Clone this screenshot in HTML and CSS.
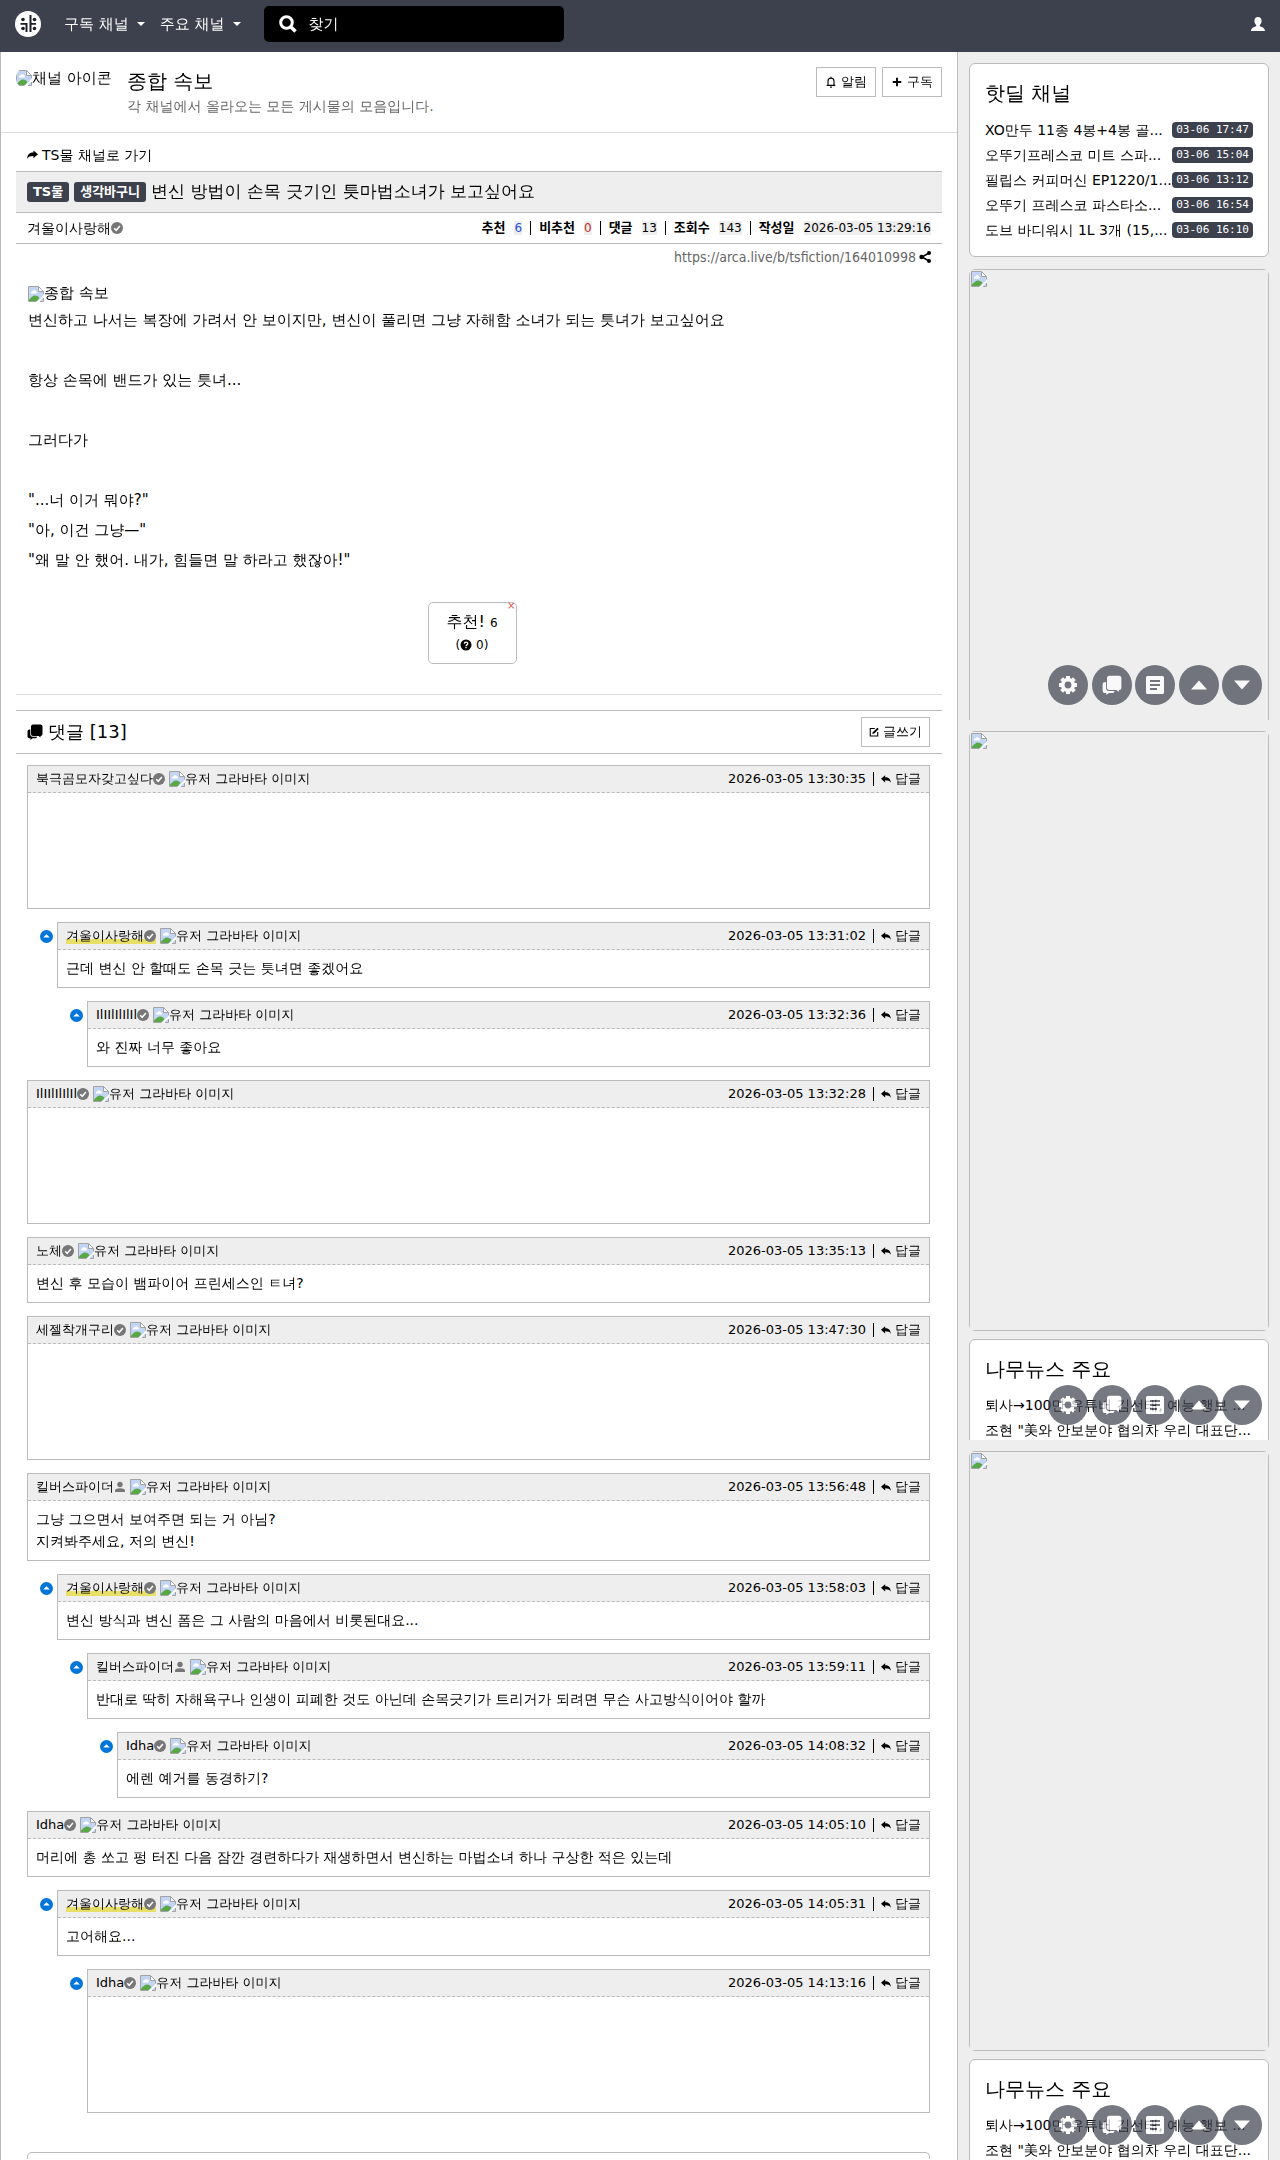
FILE: index.html
```html
<!DOCTYPE html>
<html lang="ko">
<head>
  <meta charset="UTF-8">
  <meta name="viewport" content="width=device-width, initial-scale=1.0">
  <title>종합 속보</title>
  <link rel="stylesheet" href="styles.css">
</head>
<body>

  <svg class="sprite" aria-hidden="true">
    <symbol id="i-broken" viewBox="0 0 16 16">
      <path d="M1 1h9.500l4.500 4.500V15H1z" fill="#c3d5f5"/>
      <path d="M3 7.500a1.500 1.500 0 0 1 1.300-2A2 2 0 0 1 8 5.300a1.300 1.300 0 0 1 .5 2.200z" fill="#fff"/>
      <path d="M1 15v-1.500C3 11.500 5 9.500 7 9.500s3.500 1 4.500 2.500L9 15z" fill="#5aa845"/>
      <path d="M16 8.500 8.500 16H11l5-5z" fill="#fff"/>
      <path d="M.5 15.500V.500h10l5 5v3M.5 15.500h8M15.500 12v3.500h-3.500" fill="none" stroke="#a3a3a3"/>
      <path d="M10.500.500v5h5z" fill="#fff" stroke="#a3a3a3"/>
    </symbol>
    <symbol id="i-check" viewBox="0 0 12 12">
      <circle cx="6" cy="6" r="6" fill="#777"/>
      <path d="M3.200 6.300 5.200 8.300 8.900 4" fill="none" stroke="#fff" stroke-width="1.500"/>
    </symbol>
    <symbol id="i-user" viewBox="0 0 12 12">
      <circle cx="6" cy="3.500" r="2.700" fill="#777"/>
      <path d="M1 11V9.500C1 8 3 7.200 6 7.200s5 .8 5 2.300V11z" fill="#777"/>
    </symbol>
    <symbol id="i-reply" viewBox="0 0 12 10">
      <path d="M5 0v2.400c4 0 6.500 2 6.800 6.600C10.500 6.800 8.500 6 5 6v2.500L0 4.200z"/>
    </symbol>
    <symbol id="i-share" viewBox="0 0 12 10">
      <path d="M7 0v2.400C3 2.400.5 4.400.2 9 1.500 6.800 3.500 6 7 6v2.500l5-4.300z"/>
    </symbol>
    <symbol id="i-chat" viewBox="0 0 16 16">
      <path d="M6 .5h7.500a2 2 0 0 1 2 2v7.500a2 2 0 0 1-2 2V13.500l-2-1.500H6a2 2 0 0 1-2-2V2.500a2 2 0 0 1 2-2z"/>
      <path d="M3.300 5.500v4.900a2.300 2.300 0 0 0 2.300 2.300H10V13a1.500 1.500 0 0 1-1.500 1.300H5.500L3.500 16v-1.700H2.300A1.800 1.800 0 0 1 .5 12.500V7.300c0-1.200 1-1.800 2.800-1.800z"/>
    </symbol>
    <symbol id="i-gear" viewBox="0 0 18 18">
      <circle cx="9" cy="9" r="5.300" fill="none" stroke="currentColor" stroke-width="3.800"/>
      <path d="M9 0v4M9 14v4M0 9h4M14 9h4M2.600 2.600l2.800 2.800M12.600 12.600l2.800 2.800M15.400 2.600l-2.800 2.800M5.400 12.600l-2.800 2.800" stroke="currentColor" stroke-width="4"/>
    </symbol>
    <symbol id="i-list" viewBox="0 0 18 18">
      <path fill-rule="evenodd" d="M1.500 0h15A1.500 1.500 0 0 1 18 1.500v15a1.500 1.500 0 0 1-1.500 1.500h-15A1.500 1.500 0 0 1 0 16.500v-15A1.500 1.500 0 0 1 1.500 0zM4 4v2h10V4zm0 4v2h10V8zm0 4v2h7v-2z"/>
    </symbol>
    <symbol id="i-up" viewBox="0 0 16 10"><path d="M8 .5 16 9.500H0z"/></symbol>
    <symbol id="i-down" viewBox="0 0 16 10"><path d="M0 .5h16L8 9.500z"/></symbol>
    <symbol id="i-fold" viewBox="0 0 12 12">
      <circle cx="6" cy="6" r="6" fill="#0275d8"/>
      <path d="M6 4 9 7H3z" fill="#fff"/>
    </symbol>
  </svg>

  <nav class="navbar">
    <a href="#" class="logo" aria-label="홈">
      <svg viewBox="0 0 26 26">
        <circle cx="13" cy="13" r="13" fill="#fff"/>
        <g fill="#1d1f26">
          <rect x="14.500" y="4" width="2" height="17"/>
          <circle cx="8" cy="8.500" r="1.800"/>
          <circle cx="19.500" cy="8.500" r="1.800"/>
          <circle cx="8" cy="17.500" r="1.800"/>
          <circle cx="19.500" cy="17.500" r="1.800"/>
          <path d="M5.500 12h7v9h-2v-7.200h-5zM16 12h5v1.800h-5z"/>
        </g>
      </svg>
    </a>
    <a href="#" class="nav-link">구독 채널</a>
    <a href="#" class="nav-link">주요 채널</a>
    <form class="search">
      <svg viewBox="0 0 18 18" aria-hidden="true">
        <circle cx="7.500" cy="7.500" r="5.800" fill="none" stroke="#fff" stroke-width="3"/>
        <path d="m11.500 11.500 5 5" stroke="#fff" stroke-width="3.600"/>
      </svg>
      <input type="text" placeholder="찾기" aria-label="찾기">
    </form>
    <a href="#" class="account" aria-label="로그인">
      <svg viewBox="0 0 16 16"><path d="M8 1c2.300 0 3.600 1.600 3.600 4 0 1.700-.8 3.200-1.800 4v1.300c2.500.9 5 1.700 5.200 4.700H1c.2-3 2.700-3.800 5.200-4.700V9c-1-.8-1.800-2.300-1.800-4C4.400 2.600 5.700 1 8 1z" fill="#fff"/></svg>
    </a>
  </nav>

  <div class="content-wrapper">
    <main class="board">

      <header class="board-title">
        <a href="#" class="channel-icon"><svg class="broken"><use href="#i-broken"/></svg>채널 아이콘</a>
        <div class="channel-info">
          <a href="#" class="channel-name">종합 속보</a>
          <p>각 채널에서 올라오는 모든 게시물의 모음입니다.</p>
        </div>
        <div class="channel-buttons">
          <button type="button" class="btn">
            <svg viewBox="0 0 12 14"><path d="M2.500 10.500V6a3.500 3.500 0 0 1 7 0v4.500M1 11h10M6 1v2M5 13h2" fill="none" stroke="#000" stroke-width="1.300"/></svg>
            알림
          </button>
          <button type="button" class="btn">
            <svg viewBox="0 0 12 14"><path d="M6 2v10M1 7h10" stroke="#000" stroke-width="2.200"/></svg>
            구독
          </button>
        </div>
      </header>

      <article class="article">
        <a href="#" class="go-channel"><svg><use href="#i-share"/></svg>TS물 채널로 가기</a>

        <div class="title-row">
          <span class="badge">TS물</span>
          <span class="badge">생각바구니</span>
          <h1>변신 방법이 손목 긋기인 틋마법소녀가 보고싶어요</h1>
        </div>

        <div class="info-row">
          <a href="#" class="user">겨울이사랑해<svg><use href="#i-check"/></svg></a>
          <div class="article-info">
            <b>추천</b><span class="num up">6</span><i></i>
            <b>비추천</b><span class="num down">0</span><i></i>
            <b>댓글</b><span class="num">13</span><i></i>
            <b>조회수</b><span class="num">143</span><i></i>
            <b>작성일</b><time class="num">2026-03-05 13:29:16</time>
          </div>
        </div>

        <div class="article-link">
          <a href="#">https://arca.live/b/tsfiction/164010998</a>
          <svg viewBox="0 0 12 12"><path d="M10 2 3 6l7 4" fill="none" stroke="#000" stroke-width="1.600"/><circle cx="10" cy="2" r="2"/><circle cx="2.500" cy="6" r="2.200"/><circle cx="10" cy="10" r="2"/></svg>
        </div>

        <div class="article-body">
          <div class="article-image"><svg class="broken"><use href="#i-broken"/></svg>종합 속보</div>
          <p>변신하고 나서는 복장에 가려서 안 보이지만, 변신이 풀리면 그냥 자해함 소녀가 되는 틋녀가 보고싶어요</p>
          <p><br></p>
          <p>항상 손목에 밴드가 있는 틋녀...</p>
          <p><br></p>
          <p>그러다가</p>
          <p><br></p>
          <p>"...너 이거 뭐야?"</p>
          <p>"아, 이건 그냥—"</p>
          <p>"왜 말 안 했어. 내가, 힘들면 말 하라고 했잖아!"</p>
        </div>

        <div class="vote-area">
          <button type="button" class="vote">
            <span class="vote-up">추천! <small>6</small></span>
            <span class="vote-sub">(<svg viewBox="0 0 12 12"><circle cx="6" cy="6" r="5.500"/><path d="M4.300 4.800c0-2.200 3.500-2.200 3.500-.2C7.800 5.900 6 5.800 6 7.200M6 8v1.300" fill="none" stroke="#fff" stroke-width="1.300"/></svg> 0)</span>
            <span class="vote-close">×</span>
          </button>
        </div>
      </article>

      <section class="comments">
        <div class="comments-title">
          <h2><svg><use href="#i-chat"/></svg>댓글 [13]</h2>
          <a href="#" class="btn btn-write">
            <svg viewBox="0 0 12 12"><path d="M7 1.700H1.500v9h9V6" fill="none" stroke="#000" stroke-width="1.300"/><path d="m4 8.500.6-2.300L10 .8l1.600 1.600L6.200 7.800z"/></svg>
            글쓰기
          </a>
        </div>
        <div class="comment-list" id="commentList"></div>
        <div class="reply-form"></div>
      </section>
    </main>

    <aside class="sidebar">
      <section class="side-page side-first">
        <div class="card hotdeal">
          <h3>핫딜 채널</h3>
          <a href="#"><span>XO만두 11종 4봉+4봉 골...</span><time>03-06 17:47</time></a>
          <a href="#"><span>오뚜기프레스코 미트 스파...</span><time>03-06 15:04</time></a>
          <a href="#"><span>필립스 커피머신 EP1220/1...</span><time>03-06 13:12</time></a>
          <a href="#"><span>오뚜기 프레스코 파스타소...</span><time>03-06 16:54</time></a>
          <a href="#"><span>도브 바디워시 1L 3개 (15,...</span><time>03-06 16:10</time></a>
        </div>
        <div class="ad"><div class="ad-frame"><svg class="broken"><use href="#i-broken"/></svg></div></div>
      </section>
      <section class="side-page">
        <div class="ad"><div class="ad-frame"><svg class="broken"><use href="#i-broken"/></svg></div></div>
        <div class="card news">
          <h3>나무뉴스 주요</h3>
          <a href="#">퇴사→100만 유튜버 김선태, 예능 행보 ...</a>
          <a href="#">조현 "美와 안보분야 협의차 우리 대표단...</a>
        </div>
      </section>
      <section class="side-page">
        <div class="ad"><div class="ad-frame"><svg class="broken"><use href="#i-broken"/></svg></div></div>
        <div class="card news">
          <h3>나무뉴스 주요</h3>
          <a href="#">퇴사→100만 유튜버 김선태, 예능 행보 ...</a>
          <a href="#">조현 "美와 안보분야 협의차 우리 대표단...</a>
        </div>
      </section>
    </aside>
  </div>

  <script>
    const comments = [
      { depth: 0, name: '북극곰모자갖고싶다', time: '13:30:35' },
      { depth: 1, name: '겨울이사랑해', writer: true, time: '13:31:02', text: '근데 변신 안 할때도 손목 긋는 틋녀면 좋겠어요' },
      { depth: 2, name: 'IlIIlIlIlIl', time: '13:32:36', text: '와 진짜 너무 좋아요' },
      { depth: 0, name: 'IlIIlIlIlIl', time: '13:32:28' },
      { depth: 0, name: '노체', time: '13:35:13', text: '변신 후 모습이 뱀파이어 프린세스인 ㅌ녀?' },
      { depth: 0, name: '세젤착개구리', time: '13:47:30' },
      { depth: 0, name: '킬버스파이더', half: true, time: '13:56:48', text: '그냥 그으면서 보여주면 되는 거 아님?<br>지켜봐주세요, 저의 변신!' },
      { depth: 1, name: '겨울이사랑해', writer: true, time: '13:58:03', text: '변신 방식과 변신 폼은 그 사람의 마음에서 비롯된대요...' },
      { depth: 2, name: '킬버스파이더', half: true, time: '13:59:11', text: '반대로 딱히 자해욕구나 인생이 피폐한 것도 아닌데 손목긋기가 트리거가 되려면 무슨 사고방식이어야 할까' },
      { depth: 3, name: 'Idha', time: '14:08:32', text: '에렌 예거를 동경하기?' },
      { depth: 0, name: 'Idha', time: '14:05:10', text: '머리에 총 쏘고 펑 터진 다음 잠깐 경련하다가 재생하면서 변신하는 마법소녀 하나 구상한 적은 있는데' },
      { depth: 1, name: '겨울이사랑해', writer: true, time: '14:05:31', text: '고어해요...' },
      { depth: 2, name: 'Idha', time: '14:13:16' }
    ];

    document.getElementById('commentList').innerHTML = comments.map(c => `
      <div class="comment depth-${c.depth}">
        ${c.depth ? '<button type="button" class="fold" aria-label="접기"><svg><use href="#i-fold"/></svg></button>' : ''}
        <div class="comment-box">
          <div class="comment-head">
            <a href="#" class="user ${c.writer ? 'writer' : ''}">${c.name}<svg><use href="#${c.half ? 'i-user' : 'i-check'}"/></svg></a>
            <span class="avatar"><svg class="broken"><use href="#i-broken"/></svg>유저 그라바타 이미지</span>
            <time>2026-03-05 ${c.time}</time>
            <i></i>
            <a href="#" class="reply"><svg><use href="#i-reply"/></svg>답글</a>
          </div>
          <div class="comment-body ${c.text ? '' : 'emoticon'}">${c.text || ''}</div>
        </div>
      </div>`).join('');

    // quick menu shown at the bottom of every sidebar page
    const menu = [['설정', 'gear'], ['댓글', 'chat'], ['목록', 'list'], ['위로', 'up'], ['아래로', 'down']];
    document.querySelectorAll('.side-page').forEach(page => {
      const nav = document.createElement('div');
      nav.className = 'quick-menu';
      nav.innerHTML = menu.map(([label, icon]) =>
        `<button type="button" aria-label="${label}"><svg class="${icon}"><use href="#i-${icon}"/></svg></button>`).join('');
      page.appendChild(nav);
    });
  </script>
</body>
</html>
```
FILE: styles.css
```css
* {
  box-sizing: border-box;
}

body {
  margin: 0;
  background-color: #eee;
  color: #000;
  font-family: "DejaVu Sans", "WenQuanYi Zen Hei", "Noto Sans CJK KR", sans-serif;
  font-size: 14px;
  line-height: 22px;
}

a {
  color: inherit;
  text-decoration: none;
}

p, h1, h2, h3 {
  margin: 0;
  font-weight: normal;
}

b, .badge {
  font-family: "DejaVu Sans", "Noto Sans CJK KR", sans-serif;
  font-weight: bold;
}

svg {
  flex: none;
}

.sprite {
  display: none;
}

.broken {
  width: 16px;
  height: 16px;
}

/* navbar */
.navbar {
  display: flex;
  align-items: center;
  height: 52px;
  padding: 0 14px 4px 15px;
  background-color: #3d414d;
  color: #fff;
  font-size: 15px;
}

.logo {
  display: flex;
  margin-right: 23px;
}

.logo svg {
  width: 26px;
  height: 26px;
}

.nav-link {
  display: flex;
  align-items: center;
  margin-right: 15px;
}

.nav-link::after {
  content: "";
  margin-left: 8px;
  border: 4px solid transparent;
  border-top-color: #fff;
  border-bottom: 0;
}

.search {
  display: flex;
  align-items: center;
  width: 300px;
  height: 36px;
  margin-left: 8px;
  padding: 0 15px;
  border-radius: 5px;
  background-color: #000;
}

.search svg {
  width: 18px;
  height: 18px;
}

.search input {
  flex: 1;
  min-width: 0;
  margin-left: 12px;
  padding: 0;
  border: 0;
  outline: 0;
  background: none;
  color: #fff;
  font: inherit;
}

.search input::placeholder {
  color: #fff;
  opacity: 1;
}

.account {
  display: flex;
  margin-left: auto;
}

.account svg {
  width: 16px;
  height: 16px;
}

/* layout */
.content-wrapper {
  display: flex;
  align-items: stretch;
}

.board {
  flex: 1;
  min-width: 0;
  padding: 0 15px;
  border: 1px solid #bbb;
  border-width: 0 1px;
  background-color: #fff;
}

.btn {
  display: flex;
  align-items: center;
  gap: 4px;
  height: 30px;
  padding: 0 8px;
  border: 1px solid #bbb;
  background-color: #fff;
  color: #000;
  font: inherit;
  font-size: 13px;
}

.btn svg {
  width: 12px;
  height: 12px;
}

.board-title {
  display: flex;
  height: 81px;
  margin: 0 -15px;
  padding: 15px 15px 0;
  border-bottom: 1px solid #ddd;
}

.channel-icon {
  display: flex;
  align-items: center;
  width: 96px;
  height: 22px;
  overflow: hidden;
  border-radius: 11px;
  font-size: 15px;
  white-space: nowrap;
}

.channel-info {
  flex: 1;
  padding-left: 15px;
}

.channel-name {
  display: block;
  font-size: 20px;
  line-height: 28px;
}

.channel-info p {
  color: #666;
}

.channel-buttons {
  display: flex;
  gap: 6px;
}

/* article */
.go-channel {
  display: flex;
  align-items: center;
  gap: 4px;
  height: 38px;
  padding: 6px 11px 0;
}

.go-channel svg {
  width: 11px;
  height: 10px;
}

.title-row {
  display: flex;
  align-items: center;
  gap: 5px;
  height: 42px;
  padding: 0 11px;
  border: 1px solid #bbb;
  border-width: 1px 0;
  background-color: #eee;
}

.title-row h1 {
  padding-bottom: 3px;
  font-size: 17px;
}

.badge {
  padding: 0 6px;
  border-radius: 3px;
  background-color: #3d414d;
  color: #fff;
  font-size: 13px;
  line-height: 20px;
}

.info-row {
  display: flex;
  align-items: center;
  justify-content: space-between;
  height: 31px;
  padding: 0 11px;
  border-bottom: 1px solid #bbb;
}

.user {
  display: flex;
  align-items: center;
}

.user svg {
  width: 12px;
  height: 12px;
}

.article-info {
  display: flex;
  align-items: center;
  font-size: 12px;
  line-height: 14px;
}

.article-info b {
  font-size: 13px;
}

.num {
  margin-left: 9px;
  background-color: #eee;
}

.up {
  color: #2b50e0;
}

.down {
  color: #c62828;
}

.article-info i {
  width: 1px;
  height: 14px;
  margin: 0 8px;
  background-color: #000;
}

.article-link {
  display: flex;
  align-items: center;
  justify-content: flex-end;
  gap: 3px;
  height: 26px;
  padding: 0 11px;
  color: #666;
  font-family: "DejaVu Sans Condensed", "DejaVu Sans", sans-serif;
}

.article-link svg {
  width: 12px;
  height: 12px;
}

.article-body {
  padding: 12px 12px 0;
  font-size: 15px;
  line-height: 30px;
}

.article-image {
  display: flex;
  align-items: center;
  line-height: 23px;
}

.vote-area {
  padding: 27px 14px 0 0;
}

.vote {
  position: relative;
  display: flex;
  flex-direction: column;
  align-items: center;
  justify-content: center;
  width: 89px;
  height: 62px;
  margin: 0 auto;
  border: 1px solid #bbb;
  border-radius: 5px;
  background-color: #fff;
  color: #000;
  font: inherit;
  font-size: 16px;
}

.vote small,
.vote-sub {
  font-size: 12px;
}

.vote-sub svg {
  width: 12px;
  height: 12px;
  vertical-align: -2px;
}

.vote-close {
  position: absolute;
  top: -1px;
  right: 0;
  color: #d9534f;
  font-size: 10px;
  line-height: 8px;
}

/* comments */
.comments {
  margin-top: 30px;
  border-top: 1px solid #ddd;
}

.comments-title {
  display: flex;
  align-items: center;
  justify-content: space-between;
  height: 44px;
  margin-top: 15px;
  padding: 0 12px 0 11px;
  border: 1px solid #bbb;
  border-width: 1px 0;
}

.comments-title h2 {
  display: flex;
  align-items: center;
  gap: 5px;
  font-size: 18px;
}

.comments-title h2 svg {
  width: 16px;
  height: 16px;
}

.btn-write {
  padding: 0 7px;
}

.btn-write svg {
  width: 10px;
  height: 10px;
}

.comment-list {
  display: flex;
  flex-direction: column;
  gap: 13px;
  padding: 11px 12px 0 11px;
}

.comment {
  display: flex;
  align-items: flex-start;
}

.depth-1 { padding-left: 13px; }
.depth-2 { padding-left: 43px; }
.depth-3 { padding-left: 73px; }

.fold {
  display: flex;
  margin: 8px 4px 0 0;
  padding: 0;
  border: 0;
  background: none;
}

.fold svg {
  width: 13px;
  height: 13px;
}

.comment-box {
  flex: 1;
  min-width: 0;
  border: 1px solid #bbb;
}

.comment-head {
  display: flex;
  align-items: center;
  height: 27px;
  padding: 0 8px;
  border-bottom: 1px dashed #bbb;
  background-color: #eee;
  font-size: 13px;
}

.comment-head .user {
  line-height: 16px;
}

.writer {
  background: linear-gradient(transparent 70%, #e8df66 70%);
}

.avatar {
  display: flex;
  align-items: center;
  margin: 0 auto 0 4px;
}

.comment-head i {
  width: 1px;
  height: 14px;
  margin: 0 7px;
  background-color: #000;
}

.reply {
  display: flex;
  align-items: center;
  gap: 4px;
}

.reply svg {
  width: 10px;
  height: 9px;
}

.comment-body {
  padding: 7px 8px 8px;
}

.emoticon {
  height: 115px;
}

.reply-form {
  height: 7px;
  margin: 39px 12px 0 11px;
  border: 1px solid #bbb;
  border-bottom: 0;
  border-radius: 5px 5px 0 0;
}

/* sidebar */
.sidebar {
  width: 322px;
}

.side-page {
  position: relative;
  height: 720px;
  padding: 11px 11px 0;
  overflow: hidden;
}

.side-first {
  height: 668px;
}

.card {
  padding: 15px;
  border: 1px solid #bbb;
  border-radius: 6px;
  background-color: #fff;
}

.card h3 {
  margin-bottom: 10px;
  font-size: 20px;
  line-height: 28px;
}

.hotdeal {
  height: 194px;
  margin-bottom: 12px;
}

.hotdeal a {
  display: flex;
  align-items: center;
  height: 25px;
}

.hotdeal span {
  flex: 1;
  min-width: 0;
  white-space: nowrap;
}

.hotdeal time {
  padding: 0 4px;
  border-radius: 4px;
  background-color: #3d414d;
  color: #fff;
  font-family: "DejaVu Sans Mono", monospace;
  font-size: 11px;
  line-height: 16px;
}

.ad {
  height: 600px;
  margin-bottom: 8px;
  overflow: hidden;
  border-radius: 6px;
}

.ad-frame {
  height: 100%;
  padding: 1px;
  border: 1px solid #bbb;
  line-height: 0;
}

.news a {
  display: block;
  height: 25px;
  white-space: nowrap;
  line-height: 25px;
}

.quick-menu {
  position: absolute;
  right: 18px;
  bottom: 15px;
  display: flex;
  justify-content: space-between;
  width: 214px;
}

.quick-menu button {
  display: flex;
  align-items: center;
  justify-content: center;
  width: 40px;
  height: 40px;
  padding: 0;
  border: 0;
  border-radius: 50%;
  background-color: #3d414d;
  color: #fff;
  opacity: 0.7;
}

.quick-menu svg {
  width: 18px;
  height: 18px;
  fill: #fff;
}

.quick-menu .chat {
  width: 20px;
  height: 20px;
}

.quick-menu .up,
.quick-menu .down {
  width: 16px;
  height: 10px;
}
```
